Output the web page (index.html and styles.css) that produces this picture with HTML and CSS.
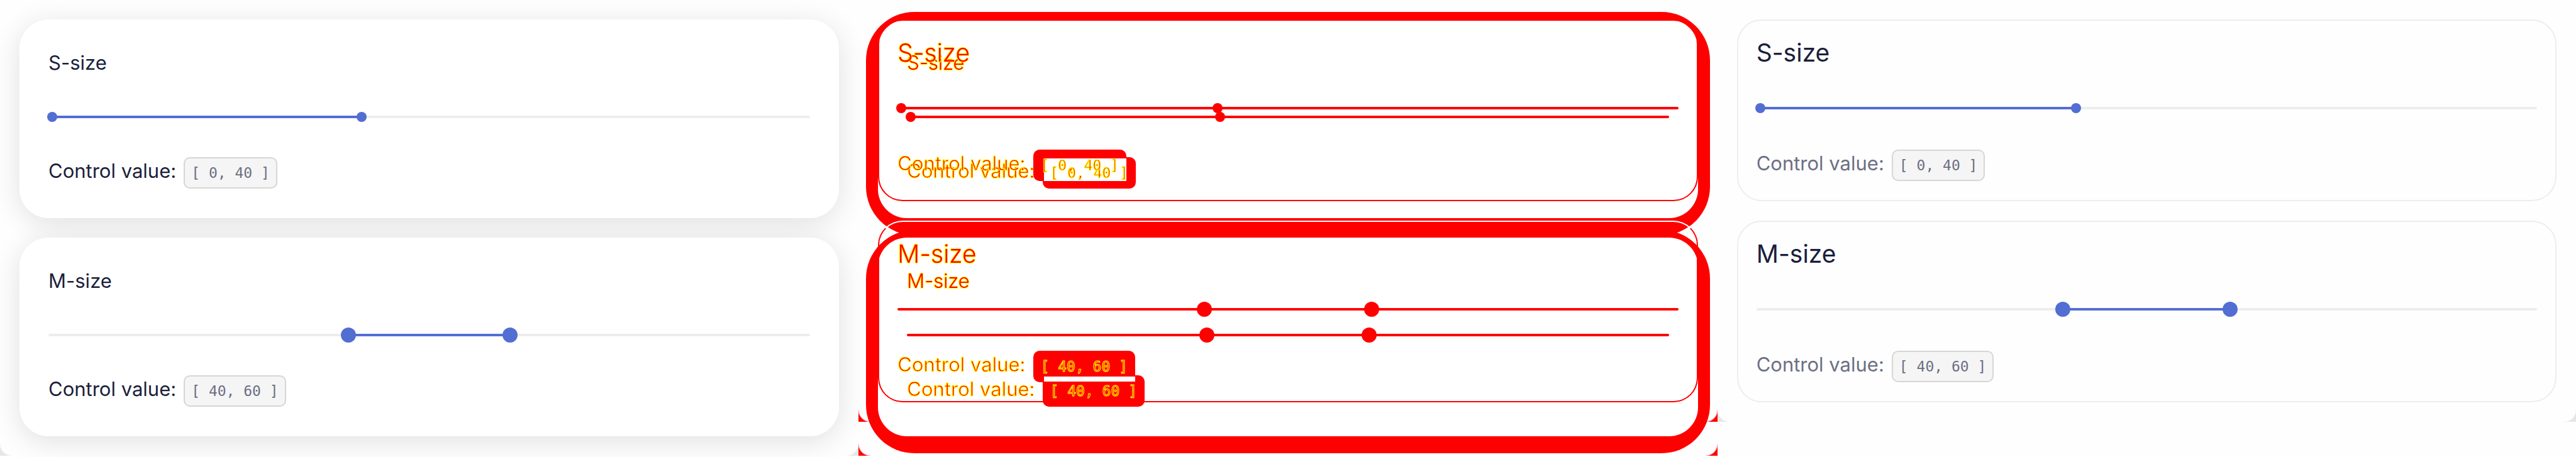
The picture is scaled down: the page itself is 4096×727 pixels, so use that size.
FILE: index.html
```html
<!DOCTYPE html>
<html lang="en">
<head>
<meta charset="utf-8">
<title>Range slider sizes</title>
<link rel="stylesheet" href="styles.css">
</head>
<body>
<main class="board">
  <section class="panel raised corners">
    <article class="card">
      <h2 class="title">S-size</h2>
      <div class="slider small" style="--from:0%;--to:41%"><input type="range" aria-label="S-size from" step="0.1" value="0"><input type="range" aria-label="S-size to" step="0.1" value="41"></div>
      <p class="row">Control value: <code class="badge"><span>[ 0, 40 ]</span></code></p>
    </article>
    <article class="card">
      <h2 class="title">M-size</h2>
      <div class="slider medium" style="--from:39.3%;--to:60.7%"><input type="range" aria-label="M-size from" step="0.1" value="39.2"><input type="range" aria-label="M-size to" step="0.1" value="60.8"></div>
      <p class="row">Control value: <code class="badge"><span>[ 40, 60 ]</span></code></p>
    </article>
  </section>

  <section class="compare">
    <div class="panel glow"><div class="halo"></div><div class="halo"></div></div>
    <div class="panel raised diff corners">
      <article class="card">
        <h2 class="title">S-size</h2>
        <div class="slider small" style="--from:0%;--to:41%"><input type="range" aria-label="S-size from" step="0.1" value="0"><input type="range" aria-label="S-size to" step="0.1" value="41"></div>
        <p class="row">Control value: <code class="badge shared-s"><span>[ 0, 40 ]</span></code></p>
      </article>
      <article class="card">
        <h2 class="title">M-size</h2>
        <div class="slider medium" style="--from:39.3%;--to:60.7%"><input type="range" aria-label="M-size from" step="0.1" value="39.2"><input type="range" aria-label="M-size to" step="0.1" value="60.8"></div>
        <p class="row">Control value: <code class="badge shared-m"><span>[ 40, 60 ]</span></code></p>
      </article>
    </div>
    <div class="panel outlined diff corners">
      <article class="card">
        <h2 class="title">S-size</h2>
        <div class="slider small" style="--from:0%;--to:41%"><input type="range" aria-label="S-size from" step="0.1" value="0"><input type="range" aria-label="S-size to" step="0.1" value="40.9"></div>
        <p class="row">Control value: <code class="badge"><span>[ 0, 40 ]</span></code></p>
      </article>
      <article class="card">
        <h2 class="title">M-size</h2>
        <div class="slider medium" style="--from:39.3%;--to:60.7%"><input type="range" aria-label="M-size from" step="0.1" value="39.1"><input type="range" aria-label="M-size to" step="0.1" value="60.9"></div>
        <p class="row">Control value: <code class="badge"><span>[ 40, 60 ]</span></code></p>
      </article>
    </div>
  </section>

  <section class="panel outlined corners">
    <article class="card">
      <h2 class="title">S-size</h2>
      <div class="slider small" style="--from:0%;--to:41%"><input type="range" aria-label="S-size from" step="0.1" value="0"><input type="range" aria-label="S-size to" step="0.1" value="40.9"></div>
      <p class="row">Control value: <code class="badge"><span>[ 0, 40 ]</span></code></p>
    </article>
    <article class="card">
      <h2 class="title">M-size</h2>
      <div class="slider medium" style="--from:39.3%;--to:60.7%"><input type="range" aria-label="M-size from" step="0.1" value="39.1"><input type="range" aria-label="M-size to" step="0.1" value="60.9"></div>
      <p class="row">Control value: <code class="badge"><span>[ 40, 60 ]</span></code></p>
    </article>
  </section>
</main>
</body>
</html>
```

FILE: styles.css
```css
* { box-sizing: border-box; }

body {
  margin: 0;
  background: #fefefe;
  font-family: Inter, "Liberation Sans", sans-serif;
  color: #1b1f3b;
}

.board {
  --accent: #526ed3;
  --track: #ededed;
  --corner: #e6e6e6;
  display: grid;
  grid-template-columns: repeat(3, minmax(0, 1fr));
  min-height: 100vh;
}

.panel {
  display: flex;
  flex-direction: column;
  gap: 31px;
  padding: 31px;
  min-width: 0;
}

/* Rounded lower corners of the page behind each panel */
.corners {
  --edge: 2px;
  background:
    radial-gradient(circle at 100% 0, transparent 18px, var(--corner) 20px) left bottom var(--edge) / 19px 19px no-repeat,
    radial-gradient(circle at 0 0, transparent 18px, var(--corner) 20px) right bottom var(--edge) / 19px 19px no-repeat;
}

.outlined.corners { --edge: 56px; }

.card {
  display: flex;
  flex-direction: column;
}

.raised .card {
  padding: 46px 46px 48px;
  gap: 51px;
  border-radius: 46px;
  background: #fff;
  box-shadow: 0 8px 46px rgba(0, 0, 0, 0.12);
}

.outlined .card {
  padding: 28px 29px 31px;
  gap: 53px;
  border: 2px solid #ededed;
  border-radius: 39px;
}

.title {
  margin: 0;
  font-weight: 400;
  font-size: 31px;
  line-height: 46px;
}

.outlined .title { font-size: 39px; }

.row {
  display: flex;
  align-items: baseline;
  gap: 12px;
  height: 50px;
  margin: 0;
  font-size: 31px;
  line-height: 46px;
}

.outlined .row { color: #6c6f84; }

.badge {
  position: relative;
  padding: 0 10px;
  border: 2px solid #d6d6d6;
  border-radius: 10px;
  background: #f5f5f5;
  color: #6c6f84;
  font-family: "DejaVu Sans Mono", monospace;
  font-size: 23px;
  white-space: pre;
}

.slider {
  position: relative;
  height: 24px;
  padding-top: 10px;
}

.slider::before {
  content: "";
  display: block;
  height: 4px;
  border-radius: 2px;
  background: linear-gradient(to right, var(--track) var(--from), var(--accent) var(--from), var(--accent) var(--to), var(--track) var(--to));
}

.slider input {
  position: absolute;
  top: 0;
  left: -2px;
  width: calc(100% + 4px);
  height: 24px;
  margin: 0;
  appearance: none;
  background: none;
  pointer-events: none;
}

.slider input::-webkit-slider-thumb {
  appearance: none;
  width: 16px;
  height: 16px;
  border-radius: 50%;
  background: var(--accent);
  pointer-events: auto;
}

.medium input::-webkit-slider-thumb {
  width: 24px;
  height: 24px;
}

/* Overlaid comparison of both panels */
.compare {
  display: grid;
  isolation: isolate;
}

.compare > .panel { grid-area: 1 / 1; }

.glow {
  gap: 0;
  padding: 19px 12px 0;
}

.halo {
  flex: none;
  height: 355px;
  border-radius: 77px;
  background: #f00;
}

.halo + .halo { margin-top: -8px; }

.diff {
  --accent: #f00;
  --track: #f00;
  --corner: #f00;
}

.diff .card {
  box-shadow: none;
  border-color: #f00;
}

.outlined.diff .card + .card { border-top-color: #fff; }

.diff .title,
.diff .row {
  color: #f00;
  -webkit-text-stroke: 1px #ff0;
}

.diff .title {
  font-weight: 300;
  -webkit-text-stroke-width: 2px;
  paint-order: stroke fill;
}

.diff .badge {
  border-color: #f00;
  background: #f00;
  color: #f00;
}

.diff .badge span {
  position: relative;
  z-index: 2;
}

.diff .badge::after {
  position: absolute;
  z-index: 1;
  background: #fff;
}

.shared-s::after {
  content: "";
  inset: 0 13px 10px 0;
}

.shared-m::after {
  content: "";
  inset: 0 13px 38px 0;
}
```
